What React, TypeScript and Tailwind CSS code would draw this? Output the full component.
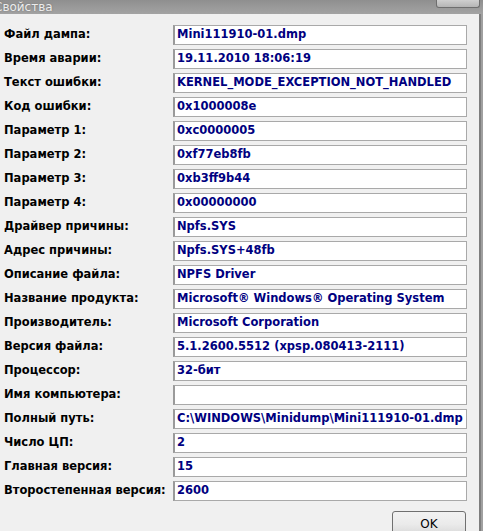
const rows: { label: string; value: string }[] = [
  { label: "Файл дампа:", value: "Mini111910-01.dmp" },
  { label: "Время аварии:", value: "19.11.2010 18:06:19" },
  { label: "Текст ошибки:", value: "KERNEL_MODE_EXCEPTION_NOT_HANDLED" },
  { label: "Код ошибки:", value: "0x1000008e" },
  { label: "Параметр 1:", value: "0xc0000005" },
  { label: "Параметр 2:", value: "0xf77eb8fb" },
  { label: "Параметр 3:", value: "0xb3ff9b44" },
  { label: "Параметр 4:", value: "0x00000000" },
  { label: "Драйвер причины:", value: "Npfs.SYS" },
  { label: "Адрес причины:", value: "Npfs.SYS+48fb" },
  { label: "Описание файла:", value: "NPFS Driver" },
  { label: "Название продукта:", value: "Microsoft® Windows® Operating System" },
  { label: "Производитель:", value: "Microsoft Corporation" },
  { label: "Версия файла:", value: "5.1.2600.5512 (xpsp.080413-2111)" },
  { label: "Процессор:", value: "32-бит" },
  { label: "Имя компьютера:", value: "" },
  { label: "Полный путь:", value: "C:\\WINDOWS\\Minidump\\Mini111910-01.dmp" },
  { label: "Число ЦП:", value: "2" },
  { label: "Главная версия:", value: "15" },
  { label: "Второстепенная версия:", value: "2600" },
];

export default function App() {
  return (
    <div
      className="w-[483px] h-[531px] flex flex-col bg-[#9a9a9a] overflow-hidden"
      style={{ fontFamily: '"DejaVu Sans", Tahoma, sans-serif' }}
    >
      {/* Title bar */}
      <div className="h-[14px] shrink-0 flex items-end justify-between bg-gradient-to-b from-[#8f8f8f] to-[#a3a3a3]">
        <span className="text-[12px] leading-[14px] text-[#ececec] -ml-[6px] [text-shadow:0_0_2px_#707070]">
          Свойства
        </span>
        <div className="self-start w-[44px] h-[8px] mr-[3px] border border-t-0 border-[#6e6e6e] rounded-b-[3px] bg-gradient-to-b from-[#cfcfcf] to-[#b5b5b5]" />
      </div>

      <div className="flex flex-1 min-h-0">
        {/* Content */}
        <div className="w-[479px] bg-[#f0f0f0] flex flex-col pt-[11px]">
          <div className="flex flex-col gap-[4px]">
            {rows.map((r) => (
              <div key={r.label} className="flex items-center h-[20px]">
                <span className="w-[173px] pl-[4px] text-[11.5px] font-bold text-black whitespace-nowrap">
                  {r.label}
                </span>
                <div className="w-[294px] h-[20px] bg-white border border-[#a9a9a9] border-l-2 border-l-[#9a9a9a] flex items-center pl-[2px] overflow-hidden">
                  <span className="text-[11.5px] font-bold text-[#000080] whitespace-nowrap">
                    {r.value}
                  </span>
                </div>
              </div>
            ))}
          </div>
          <div className="flex justify-end pr-[13px] pt-[10px]">
            <button className="w-[74px] h-[26px] border border-[#707070] rounded-[3px] bg-gradient-to-b from-[#f2f2f2] via-[#ebebeb] to-[#d6d6d6] text-[12px] text-black shrink-0">
              OK
            </button>
          </div>
        </div>
        <div className="w-[2px] bg-[#7e7e7e]" />
        <div className="flex-1 bg-[#a0a0a0]" />
      </div>
    </div>
  );
}
